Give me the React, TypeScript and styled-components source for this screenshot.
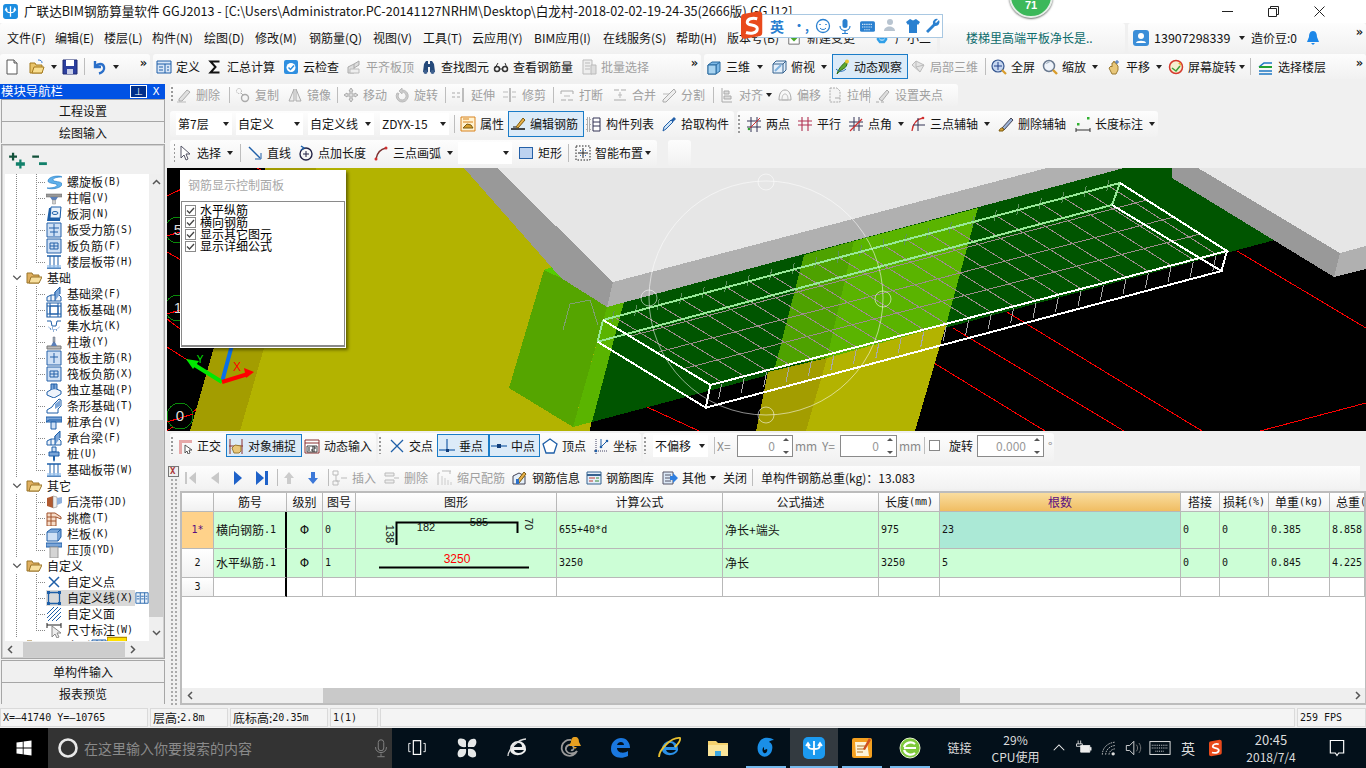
import React from 'react';
import styled, { createGlobalStyle } from 'styled-components';

const Global = createGlobalStyle`
  html, body { margin: 0; padding: 0; width: 1366px; height: 768px; overflow: hidden; background: #f0f0f0; }
  * { box-sizing: border-box; }
`;
const CJK = `"Noto Sans CJK SC", "Liberation Sans", sans-serif`;
const MONO = `"DejaVu Sans Mono", "Liberation Mono", monospace`;

/* ---------- icons ---------- */
const ICONS: Record<string, React.ReactNode> = {
  new: <><path d="M3 1h7l3 3v11H3z" fill="#fff" stroke="#555" /><path d="M10 1v3h3" fill="#ddd" stroke="#555" /></>,
  open: <><path d="M1 4h5l1 2h6v8H1z" fill="#e9c46a" stroke="#a57a1e" /><path d="M3 14l2-6h10l-2 6z" fill="#f8de90" stroke="#a57a1e" /><path d="M9 1c3 0 4 1 4 3" fill="none" stroke="#3a7bd0" /></>,
  save: <><path d="M1 1h14v14H1z" fill="#2c3f9e" stroke="#1c2870" /><path d="M4 1h8v6H4z" fill="#fff" /><path d="M5 10h6v5H5z" fill="#c9cfe8" /></>,
  undo: <path d="M4 2v6h6M4.500 7.500C7 4 12 4 13 8c.7 3-1.500 5.500-5 6.500" fill="none" stroke="#2a6fc9" strokeWidth="2.400" />,
  def: <><path d="M1 2h14v12H1z" fill="#d8e6f7" stroke="#1e5fa8" /><path d="M1 5h14M9 5v9M3 8h4M3 11h4M11 8h2M11 11h2" stroke="#1e5fa8" fill="none" /></>,
  sigma: <path d="M12.500 2.500H3.500l5 5.500-5 5.500h9" fill="none" stroke="#111" strokeWidth="2" />,
  cloud: <><rect x="1" y="1" width="14" height="14" rx="2" fill="#2f8fe0" /><circle cx="8" cy="8.500" r="4.500" fill="#fff" /><path d="M5.500 8.500l2 2 3.500-4" fill="none" stroke="#2f8fe0" strokeWidth="1.500" /></>,
  flat: <><path d="M2 14V8l6-3v9zM8 5l5-3v4l-5 3" fill="#ddd" stroke="#aaa" /><path d="M4 14h9v-4H4z" fill="#eee" stroke="#bbb" /></>,
  bino: <><path d="M2 13l1-8 2-3h2v11zM14 13l-1-8-2-3H9v11z" fill="#24497a" /><path d="M7 5h2v3H7z" fill="#24497a" /><circle cx="4.500" cy="13" r="2" fill="#40618f" /><circle cx="11.500" cy="13" r="2" fill="#40618f" /></>,
  look: <><circle cx="4" cy="10" r="2.500" fill="none" stroke="#333" strokeWidth="1.500" /><circle cx="12" cy="10" r="2.500" fill="none" stroke="#333" strokeWidth="1.500" /><path d="M6.500 10h3M2 9l3-5M14 9l-2-5" fill="none" stroke="#333" /></>,
  batch: <><path d="M2 1h9v14H2z" fill="#eee" stroke="#bbb" /><path d="M4 4h5M4 7h5M4 10h5M10 6h5v9h-5z" fill="#ddd" stroke="#bbb" /></>,
  cube: <><path d="M2 6l4-3h8v9l-4 3H2z" fill="#7db8e6" stroke="#2b6a9f" /><path d="M2 6h8v9M10 6l4-3" fill="none" stroke="#2b6a9f" /><path d="M2 6h8v9H2z" fill="#a8d3f0" stroke="#2b6a9f" /></>,
  top: <><path d="M2 5l3-3h10v9l-3 3H2z" fill="#e4effa" stroke="#35628f" /><path d="M2 5h10v9M12 5l3-3" fill="none" stroke="#35628f" /><path d="M4 12l6-6" stroke="#7fb2de" strokeWidth="2" /></>,
  orbit: <><path d="M3 15C5 8 9 6 12 2c2 2 1 6-3 8-2 1-4 3-6 5z" fill="#5fa82e" stroke="#2c6d14" /><circle cx="13" cy="2.500" r="2" fill="#e8c62e" /><path d="M2 10c3 3 7 3 10 0" fill="none" stroke="#2468b5" /></>,
  local: <><path d="M2 6l4-4 8 4-4 7z" fill="#e5e5e5" stroke="#bbb" /><path d="M6 2v6l8-2M6 8l4 5" fill="none" stroke="#bbb" /></>,
  full: <><circle cx="7" cy="7" r="6" fill="#c6d7f0" stroke="#34558f" strokeWidth="1.200" /><path d="M7 3v8M3 7h8" stroke="#23408a" /><path d="M11 11l4 4" stroke="#d99c2b" strokeWidth="2.200" /></>,
  zoom: <><circle cx="7" cy="7" r="5.500" fill="#eef3fa" stroke="#6a7a90" strokeWidth="1.500" /><path d="M4.500 5a3 3 0 0 1 3-2" fill="none" stroke="#9ab" /><path d="M11 11l4 4" stroke="#d99c2b" strokeWidth="2.400" /></>,
  pan: <><path d="M3 9l2-2 1 1V4l1 0 1-2 1 2h1l1 2 1 1v4l-2 4H6z" fill="#e8c77a" stroke="#9b7b33" /><path d="M11 1v4M9 3h4" stroke="#3a6bb5" /></>,
  screen: <><circle cx="8" cy="8" r="6.500" fill="#f5efd0" stroke="#d53a2e" strokeWidth="1.500" /><path d="M4 9l4 3 4-5" fill="none" stroke="#3aa03a" strokeWidth="1.500" /><path d="M10 4h3v3" fill="#e8b030" /></>,
  floors: <><path d="M1 8l5-4h8M1 12h13M1 15h13" fill="none" stroke="#1e78c4" strokeWidth="1.600" /><path d="M1 8h13" stroke="#20a030" strokeWidth="2" /></>,
  del: <><path d="M3 12l8-9 3 2-8 9H3z" fill="#e0e0e0" stroke="#aaa" /><path d="M1 15h9" stroke="#bbb" /></>,
  copy: <><circle cx="4" cy="4" r="2.500" fill="none" stroke="#aaa" strokeDasharray="1 1" /><circle cx="10" cy="11" r="3.500" fill="none" stroke="#aaa" strokeWidth="1.400" /><path d="M6 6l2 2" stroke="#aaa" /></>,
  mirror: <><path d="M7 2L2 14h5zM9 2l5 12H9z" fill="#eee" stroke="#aaa" /></>,
  move: <path d="M8 1l2 3H9v3h3V6l3 2-3 2V9H9v3h1l-2 3-2-3h1V9H4v1L1 8l3-2v1h3V4H6z" fill="#ddd" stroke="#aaa" />,
  rotate: <path d="M3 6a6 6 0 1 0 5-3V1L5 4l3 3V5a4 4 0 1 1-3 1.500z" fill="#ccc" stroke="#bbb" />,
  extend: <><path d="M12 1v14" stroke="#aaa" strokeWidth="1.500" /><path d="M1 6h3M6 6h3M1 10h3M6 10h3" stroke="#aaa" /></>,
  trim: <><path d="M8 1v14" stroke="#aaa" strokeWidth="1.500" /><path d="M1 5h5M1 10h5M10 5h4M10 10h4" stroke="#bbb" /></>,
  brk: <><path d="M2 4h12M2 13h5M9 13h5M2 4v3M14 4v3" stroke="#aaa" fill="none" /><path d="M5 9h6" stroke="#bbb" /></>,
  merge: <><path d="M2 3h5M9 3h5M2 13h12" stroke="#aaa" fill="none" /><path d="M6 8h4M8 5v6" stroke="#bbb" /></>,
  split: <><path d="M2 13L13 2 15 5 5 15H2z" fill="#eee" stroke="#aaa" /><path d="M2 7h6" stroke="#bbb" /></>,
  align: <><path d="M3 1v14h10" fill="none" stroke="#aaa" /><path d="M5 4h5v3H5zM5 9h7v3H5z" fill="#ddd" stroke="#aaa" /></>,
  offset: <><path d="M2 13c0-6 2-10 6-10s6 4 6 10z" fill="none" stroke="#aaa" /><path d="M5 13c0-4 1-6 3-6s3 2 3 6z" fill="none" stroke="#bbb" /></>,
  stretch: <><path d="M3 1h7l3 3v11H3z" fill="#f4f4f4" stroke="#aaa" strokeDasharray="2 1" /><path d="M8 11h5" stroke="#aaa" /></>,
  grip: <><path d="M4 12L12 3l2 2-7 9z" fill="#ddd" stroke="#aaa" /><path d="M1 15h3M6 15h3" stroke="#aaa" /></>,
  prop: <><path d="M1 1h14v14H1z" fill="#fff2d0" stroke="#d8821e" /><path d="M3 6h10M3 3h6" stroke="#d8821e" /><path d="M3 12l4-4 4 1 2 3z" fill="#d8a030" stroke="#7a5a10" /></>,
  edit: <><path d="M1 13h14" stroke="#111" strokeWidth="1.500" /><path d="M6 11l7-9 2 2-7 8z" fill="#e8b048" stroke="#7a5a10" /><path d="M3 11h3" stroke="#111" /></>,
  list: <><path d="M1 2h3v3H1zM1 7h3v3H1zM1 12h3v3H1z" fill="none" stroke="#666" strokeDasharray="1 1" /><path d="M7 2h7v13H7z" fill="#fff" stroke="#335" /><path d="M7 6h7M7 10h7" stroke="#335" /></>,
  pick: <><path d="M2 15l1-4 7-7 2 2-7 7z" fill="#cde3f6" stroke="#2460a8" /><path d="M10 4l3-3 2 2-3 3z" fill="#2460a8" /></>,
  two: <><path d="M5 1v15M11 1v15M1 5h14M1 11h14" stroke="#335" fill="none" /><path d="M2 14L14 2" stroke="#d03030" /><circle cx="3" cy="13" r="1.300" fill="#30a030" /></>,
  par: <path d="M5 1v14M11 1v14M1 5h14M1 9h14" stroke="#b03050" fill="none" strokeWidth="1.100" />,
  angle: <><path d="M6 1v14M11 1v14M1 6h14M1 10h14" stroke="#335" fill="none" /><path d="M2 15L14 3" stroke="#d03030" strokeWidth="1.300" /></>,
  arc3: <><path d="M2 15C3 7 7 3 13 2" fill="none" stroke="#d03030" strokeWidth="1.300" /><path d="M8 2v13M3 9h12" stroke="#335" /><circle cx="13" cy="2" r="1.300" fill="#d03030" /></>,
  brush: <><path d="M4 12L13 2l2 2-9 10z" fill="#9db3d6" stroke="#445" /><path d="M1 15c1-3 3-4 5-2l-1 2z" fill="#d8a030" stroke="#7a5a10" /></>,
  dim: <><path d="M1 12v4M15 12v4M1 14h14" stroke="#333" fill="none" /><rect x="2" y="7" width="2.500" height="2.500" fill="#30b030" /><rect x="12" y="1" width="2.500" height="2.500" fill="#30b030" /></>,
  cursor: <path d="M4 1v12l3-3 2 5 2-1-2-5h4z" fill="#fff" stroke="#556" />,
  line: <><path d="M2 2l11 11" stroke="#1e5fa8" strokeWidth="1.500" /><path d="M8 14l6 0 0-6" fill="none" stroke="#1e5fa8" /></>,
  ptplus: <><circle cx="8" cy="9" r="6" fill="none" stroke="#224" strokeWidth="1.400" /><path d="M8 6v6M5 9h6" stroke="#224" /><path d="M3 1l3 2-3 2" fill="none" stroke="#1e5fa8" strokeWidth="1.500" /></>,
  arc: <><path d="M3 14C4 8 8 4 13 3" fill="none" stroke="#7a3030" strokeWidth="1.500" /><circle cx="3" cy="14" r="1.500" fill="#d03030" /><circle cx="13" cy="3" r="1.500" fill="#d03030" /></>,
  rect: <rect x="1.500" y="2.500" width="13" height="11" fill="#bcd2f0" stroke="#2460a8" />,
  smart: <><path d="M1 1h14v14H1z" fill="none" stroke="#222" strokeDasharray="1.500 1.500" /><path d="M8 3v10M3 8h10" stroke="#222" /><path d="M5 5h1v1H5zM10 5h1v1h-1zM5 10h1v1H5zM10 10h1v1h-1z" fill="#2a6fc9" /></>,
  ortho: <><path d="M2 2h13v3H5v11H2z" fill="#e6a8a8" /><path d="M8 7v8l2-2 1 3 2-1-1-3h3z" fill="#fff" stroke="#555" /></>,
  snap: <><path d="M2 1v15M14 1v15M1 8h14" stroke="#8a3030" fill="none" /><path d="M4 10l3-3 6 1v5l-2 2H6z" fill="#e8c77a" stroke="#9b7b33" /></>,
  dyn: <><path d="M1 2h14v13H1z" fill="#fff" stroke="#8a3030" /><path d="M1 5h14" stroke="#8a3030" /><path d="M3 8h10v6H3z" fill="none" stroke="#444" /><path d="M5 9v4M8 9h3v2H8v2h3" fill="none" stroke="#222" /></>,
  cross: <path d="M2 2l12 12M14 2L2 14" stroke="#1e5fa8" strokeWidth="1.300" />,
  perp: <><path d="M0 12h16" stroke="#1e5fa8" strokeWidth="1.200" /><path d="M8 1v11" stroke="#1e5fa8" strokeWidth="1.200" /><rect x="7" y="11" width="3" height="3" fill="#123e7a" /></>,
  mid: <><path d="M0 8h16" stroke="#1e5fa8" strokeWidth="1.200" /><rect x="6" y="6" width="4" height="4" fill="#123e7a" /></>,
  vertex: <path d="M8 1l7 5-3 9H4L1 6z" fill="#fff" stroke="#1e5fa8" strokeWidth="1.300" />,
  coord: <><path d="M3 1v15M1 13h14" stroke="#446" strokeDasharray="1 1" fill="none" /><path d="M8 1v8l6-6" stroke="#1e5fa8" fill="none" /><circle cx="8" cy="9" r="1.300" fill="#1e5fa8" /><circle cx="14" cy="3" r="1.300" fill="#1e5fa8" /><circle cx="3" cy="13" r="1.300" fill="#1e5fa8" /></>,
  first: <path d="M3 2h2v12H3zM14 2v12L7 8z" fill="#c8c8c8" />,
  prev: <path d="M12 2v12L4 8z" fill="#c8c8c8" />,
  next: <path d="M4 1v14l8-7z" fill="#1f62c9" />,
  last: <path d="M2 1v14l8-7zM11 1h3v14h-3z" fill="#1f62c9" />,
  up: <path d="M8 2l5 6h-3v6H6V8H3z" fill="#ccc" />,
  down: <path d="M6 2h4v6h3l-5 6-5-6h3z" fill="#3c78d8" />,
  ins: <><path d="M1 1h5v4H1zM1 11h5v4H1z" fill="none" stroke="#bbb" /><path d="M4 5v6h4M9 8h6" stroke="#bbb" fill="none" /></>,
  rm: <><path d="M1 3h9v3H1zM1 10h9v3H1z" fill="#eee" stroke="#bbb" /><path d="M10 8h5" stroke="#bbb" /></>,
  scale: <><path d="M1 15V3M1 3h2M5 1h9M13 1v3" stroke="#bbb" fill="none" /><path d="M5 15V6M8 15V8M11 15v-5M14 15v-3" stroke="#ccc" /></>,
  info: <><path d="M1 6l6-3 6 3v8H1z" fill="#e4effa" stroke="#445" /><path d="M5 11l7-9 2 2-7 9z" fill="#e8b048" stroke="#7a5a10" /><path d="M4 9h3v5H4z" fill="#2a6fc9" /></>,
  lib: <><path d="M1 2h14v12H1z" fill="#e4effa" stroke="#35628f" /><path d="M1 5h14" stroke="#35628f" strokeWidth="2" /><path d="M3 8h6M3 11h4" stroke="#c03a2e" /><path d="M10 8h3M9 11h4" stroke="#3a8a2e" /></>,
  other: <><path d="M1 2h10v12H1z" fill="#dce9f7" stroke="#556" /><path d="M3 5h6M3 8h6M3 11h6" stroke="#556" /><path d="M8 6h3V3l5 5-5 5v-3H8z" fill="#2f7fe0" /></>,
  spiral: <><path d="M2 7c0-5 12-6 14-4-5 0-9 1-9 3 0 2 9 1 9 4 0 4-10 6-15 4 6 0 10-1 10-3 0-2-9-1-9-4z" fill="#5fb0ea" stroke="#1e78c4" strokeWidth=".6" /></>,
  capital: <><path d="M0 4h16v3H0z" fill="#999" stroke="#666" strokeWidth=".5" /><path d="M4 7h8l-2 3H6z" fill="#5a7fb8" /><path d="M6.500 10h3v4h-3z" fill="#d0d0d0" stroke="#888" strokeWidth=".5" /></>,
  hole: <><path d="M1 15l2-13h12l-1 13z" fill="#1e5fa8" /><path d="M5 1h10l-1 11H4z" fill="#eaf2fb" stroke="#1e5fa8" /><ellipse cx="9" cy="7" rx="3" ry="1.500" fill="none" stroke="#1e5fa8" /></>,
  sbar: <><path d="M1 1h14v14H1z" fill="#cfe0f5" stroke="#2460a8" /><path d="M8 2v12M3 6h10M4 10h8" stroke="#2460a8" /></>,
  nbar: <><path d="M1 1h14v14H1z" fill="#cfe0f5" stroke="#2460a8" /><path d="M4 5h8v6H4zM8 5v6M4 8h8" fill="none" stroke="#2460a8" /></>,
  band: <><path d="M1 2h14M1 14h14" stroke="#1e5fa8" strokeWidth="1.400" /><path d="M4 2v12M8 2v12M12 2v12" stroke="#1e5fa8" /><path d="M1 11h14v3H1z" fill="#9cc4ee" opacity=".7" /></>,
  beam: <><path d="M1 15h14v-4l-3-3V3L9 6v3L5 9 1 11z" fill="#eef3fa" stroke="#1e5fa8" /><path d="M9 15V6l5-5v7" fill="#7aa5d8" stroke="#1e5fa8" /><path d="M5 15V9" stroke="#1e5fa8" /></>,
  raft: <><path d="M1 1h14v14H1z" fill="#fff" stroke="#1e5fa8" strokeWidth="1.200" /><path d="M4 4h8v8H4zM1 4h14M1 12h14M4 1v14M12 1v14" fill="none" stroke="#1e5fa8" /></>,
  pit: <><path d="M1 3h4l1 5h4l1-5h4" fill="none" stroke="#1e5fa8" /><path d="M2 8c1 5 11 5 12 0l-3 3H5z" fill="#7aa5d8" /><path d="M4 11h1M7 13h1M10 12h1M6 10h1" stroke="#1e5fa8" /></>,
  pier: <><path d="M1 12h14v3H1z" fill="#bbb" stroke="#777" /><path d="M5 12l2-4h2l2 4z" fill="#5a7fb8" /><path d="M7 3h2v5H7z" fill="#9ab" stroke="#667" strokeWidth=".5" /></>,
  rmain: <><path d="M1 1h14v14H1z" fill="#cfe0f5" stroke="#2460a8" /><path d="M8 3v10M4 7h8" stroke="#2460a8" /></>,
  iso: <><path d="M1 10l7-4 7 3v3l-7 4-7-3z" fill="#eef3fa" stroke="#1e5fa8" /><path d="M5 8V2h6v5" fill="#7aa5d8" stroke="#1e5fa8" /><path d="M8 2v5" stroke="#1e5fa8" /></>,
  strip: <><path d="M1 15v-3l5-3 2-3 5-5 2 1v6l-3 3v4z" fill="#fff" stroke="#1e5fa8" /><path d="M9 6l5-4v6l-5 3z" fill="#7aa5d8" /></>,
  pcap: <><path d="M0 3h16v5H0z" fill="#7aa5d8" stroke="#1e5fa8" /><path d="M0 8l3-2h13" fill="none" stroke="#1e5fa8" /><path d="M5 8h5v7H5z" fill="#cfe0f5" stroke="#1e5fa8" /></>,
  pile: <><path d="M6 1h4v5H6z" fill="#cfe0f5" stroke="#1e5fa8" /><path d="M3 6h10v4H3z" fill="#7aa5d8" stroke="#1e5fa8" /><path d="M7 10h2v4l-1 2-1-2z" fill="#1e5fa8" /></>,
  post: <><path d="M1 4l6-2v12l-6-2z" fill="#b05a30" /><path d="M7 2l4 1v10l-4 1z" fill="#eee" stroke="#777" strokeWidth=".5" /><path d="M11 4l5-1v6l-5 2z" fill="#8fb0dc" /></>,
  eave: <><path d="M1 3h8l6 4v2l-5-2v9H1z" fill="#f6dcc8" stroke="#a0522d" /><path d="M1 7h9M1 11h9M5 3v13" stroke="#a0522d" /></>,
  rail: <><path d="M1 6h11v9H1z" fill="#cfe0f5" stroke="#1e5fa8" /><path d="M1 6l4-3h10l-3 3M12 6l3-3v8l-3 4" fill="#7aa5d8" stroke="#1e5fa8" /></>,
  coping: <><path d="M0 1h16v4H0z" fill="#7aa5d8" stroke="#1e5fa8" /><path d="M4 5h8v11H4z" fill="#d4d4d4" stroke="#999" /></>,
  point: <path d="M3 3l10 10M13 3L3 13" stroke="#1e5fa8" strokeWidth="1.500" />,
  cline: <><path d="M2.500 2.500h11v11h-11z" fill="none" stroke="#1e5fa8" strokeWidth="1.300" /><path d="M1 1h3v3H1zM12 1h3v3h-3zM1 12h3v3H1zM12 12h3v3h-3z" fill="#1e5fa8" /></>,
  face: <path d="M1 8l7-7M1 12L12 1M2 15L15 2M6 15l9-9M10 15l5-5" stroke="#1e5fa8" />,
  mark: <><path d="M1 1v5M15 1v5M1 3h14" stroke="#222" /><path d="M6 4v11l3-3 2 4 2-1-2-4h4z" fill="#eee" stroke="#888" /></>,
  cols: <><path d="M1 2h14v12H1z" fill="#eaf2fb" stroke="#1e5fa8" /><path d="M6 2v12M11 2v12M2 6h3M2 9h3M7 6h3M7 9h3M12 6h2M12 9h2" stroke="#1e5fa8" /></>,
  yel: <path d="M0 1h16v14H0z" fill="#ffe000" stroke="#b89000" />,
  folder: <><path d="M1 3h5l1 2h6v8H1z" fill="#e0b060" stroke="#9a7428" /><path d="M3 13l2-6h11l-3 6z" fill="#f7df9e" stroke="#9a7428" /></>,
  chev: <path d="M3 5l5 5 5-5" fill="none" stroke="#555" strokeWidth="1.600" />,
  plus: <><path d="M1 4h7v2H1zM3.500 1.500h2v7h-2z" fill="#12513a" /><path d="M7 10h8v3H7zM10 7.500h2v8h-2z" fill="#12806a" /></>,
  minus: <><path d="M2 4h6v2H2z" fill="#12513a" /><path d="M8 10h7v2.500H8z" fill="#12806a" /></>,
  logo: <><rect x="1" y="1" width="14" height="14" rx="2.500" fill="#1c8de0" /><path d="M8 3v10M4 6c0 3 2 3 4 3s4 0 4-3M3 7l1-2 1 2M11 7l1-2 1 2" fill="none" stroke="#fff" strokeWidth="1.200" /></>,
  change: <><path d="M2 1h12v14H2z" fill="#fff" stroke="#666" /><path d="M8 4l4 4-4 4-4-4z" fill="#4aa82a" /></>,
  cs: <><path d="M8 1a6 6 0 0 1 6 6v3l-3 4H5l-3-4V7a6 6 0 0 1 6-6z" fill="#2f9fe8" /><path d="M5 9c1 2 5 2 6 0" stroke="#fff" fill="none" /></>,
  user: <><rect width="16" height="16" rx="3" fill="#3b8ed8" /><circle cx="8" cy="6" r="3" fill="#fff" /><path d="M3 13c0-3 10-3 10 0z" fill="#fff" /></>,
  bell: <path d="M8 1c3 0 4 3 4 6l2 5H2l2-5c0-3 1-6 4-6zM6 13h4l-2 2z" fill="#1d87e8" />,
  smile: <><circle cx="8" cy="8" r="6.500" fill="none" stroke="#2a80d0" strokeWidth="1.300" /><path d="M5 6v1M11 6v1" stroke="#2a80d0" strokeWidth="1.500" /><path d="M5 10c1 2 5 2 6 0" fill="none" stroke="#2a80d0" /></>,
  mic: <><rect x="5.500" y="1" width="5" height="9" rx="2.500" fill="#2a80d0" /><path d="M3 8c0 6 10 6 10 0M8 13v3M5 15.500h6" fill="none" stroke="#2a80d0" strokeWidth="1.200" /></>,
  kb: <><rect x="1" y="3" width="14" height="10" rx="1.500" fill="#2a80d0" /><path d="M3 6h10M3 8.500h10M5 11h6" stroke="#fff" strokeDasharray="1 1" /></>,
  pers: <><circle cx="7" cy="4" r="3" fill="#b8c4d0" /><path d="M1 13c0-6 11-6 11 0z" fill="#b8c4d0" /></>,
  shirt: <path d="M5 1l3 1.500L11 1l4 3-2 3-1-1v9H4V6L3 7 1 4z" fill="#2a80d0" />,
  wrench: <path d="M14 2l-3 3-1-1 3-3a4 4 0 0 0-5 5L1 13l2 2 7-7a4 4 0 0 0 4-6z" fill="#2a80d0" />,
};

const TB: Record<string, React.ReactNode> = {
  win: <path d="M3 5.500l7.500-1v7H3zM11.500 4.300L21 3v8.500h-9.500zM3 12.500h7.500v7l-7.500-1zM11.500 12.500H21V21l-9.500-1.300z" fill="#fff" />,
  ring: <circle cx="12" cy="12" r="8.500" fill="none" stroke="#e8e8e8" strokeWidth="2.600" />,
  mic: <><rect x="9" y="3" width="6" height="12" rx="3" fill="none" stroke="#888" /><path d="M6 11c0 8 12 8 12 0M12 18v3M8 21.500h8" fill="none" stroke="#888" /></>,
  view: <><rect x="8" y="4" width="8" height="15" fill="none" stroke="#fff" strokeWidth="1.300" /><path d="M5 7H3v9h2M19 7h2v9h-2" fill="none" stroke="#fff" /></>,
  fan: <><path d="M11 11C5 12 2 8 3 4c1-2 6-2 8 1zM13 11c-1-6 3-9 7-8 2 1 2 6-1 8zM13 13c6-1 9 3 8 7-1 2-6 2-8-1zM11 13c1 6-3 9-7 8-2-1-2-6 1-8z" fill="#e6e8e8" /></>,
  ieb: <><path d="M4 13a8 8 0 0 1 16 0v1H8c1 4 8 4 10 0h2c-2 7-16 7-16-1zM8 11h8a4 4 0 0 0-8 0z" fill="#eee" /><path d="M2 20C2 14 12 3 20 3" fill="none" stroke="#ddd" strokeWidth="1.300" /></>,
  swirl: <><path d="M13 4a8 8 0 1 0 6 11c-2 3-9 4-11-1-1-4 4-7 7-4 2 2 0 5-2 4" fill="none" stroke="#999" strokeWidth="1.800" /><path d="M17 1c3 0 4 2 4 5l2 4H11l2-4c0-3 1-5 4-5zM15 11h4l-2 2z" fill="#e8a020" /></>,
  edge: <path d="M3 13C3 6 8 2 13 2c6 0 9 5 9 10H9c0 5 7 6 11 3v5c-8 4-17 1-17-7zM9 9h7c0-4-6-4-7 0z" fill="#1a78e0" />,
  ie: <><path d="M4 13a8 8 0 0 1 16 0v1H8c1 4 8 4 10 0h2c-2 7-16 7-16-1zM8 11h8a4 4 0 0 0-8 0z" fill="#2a90e8" /><path d="M1 21C1 14 13 1 22 2c1 3-3 7-5 9" fill="none" stroke="#e8c030" strokeWidth="1.800" /></>,
  folder: <><path d="M2 5h8l2 2h10v13H2z" fill="#f5d26e" /><path d="M2 9h20v11H2z" fill="#fbe59a" /><path d="M9 15h6v5H9z" fill="#3fa7e0" /></>,
  g: <path d="M6 5c3-4 10-4 14-1-3 0-4 1-5 2 3 1 4 4 3 8-1 5-6 8-10 6C3 18 2 10 6 5zm4 6c-2 1-2 5 0 6s4-2 3-4l-3 1z" fill="#1a8fe8" fillRule="evenodd" />,
  gld: <><rect x="1" y="1" width="22" height="22" rx="5" fill="#1c9af0" /><path d="M12 5v14M6 9c0 4 3 4 6 4s6 0 6-4M4 10l2-3 2 3M16 10l2-3 2 3" fill="none" stroke="#fff" strokeWidth="1.800" /></>,
  note: <><rect x="2" y="2" width="20" height="20" rx="2" fill="#f4a020" /><path d="M5 6h12l2 14H6z" fill="#fdf3d8" /><path d="M7 10h8M7 13h8M7 16h6" stroke="#b07020" /><path d="M19 2l-6 11 2 1 6-10z" fill="#d05020" /></>,
  egreen: <><circle cx="12" cy="12" r="10" fill="#7ec93c" stroke="#e8f4d0" /><path d="M6 12h12M17 8a7 7 0 0 0-11 3M6 14a7 7 0 0 0 11 3" fill="none" stroke="#fff" strokeWidth="2.200" /></>,
  caret: <path d="M5 15l7-7 7 7" fill="none" stroke="#eee" strokeWidth="1.400" />,
  batt: <><path d="M8 9h11v8H8z" fill="#eee" stroke="#eee" /><path d="M19 11h2v4h-2z" fill="#eee" /><path d="M5 3v4M8 3v4M3 7h7v3H3z" stroke="#eee" fill="none" /></>,
  wifi: <><path d="M4 20c0-8 6-14 15-15M8 20c0-5 4-10 11-11M12 20c0-3 2-6 7-7" fill="none" stroke="#ccc" strokeDasharray="2 1" /><circle cx="17" cy="19" r="2" fill="#ddd" /></>,
  spk: <><path d="M4 9h4l5-5v16l-5-5H4z" fill="none" stroke="#eee" /><path d="M16 8c2 2 2 6 0 8M19 6c3 3 3 9 0 12" fill="none" stroke="#888" /></>,
  kbd: <><rect x="1" y="5" width="22" height="14" fill="none" stroke="#eee" /><path d="M3 9h18M3 12h18M7 15.500h10" stroke="#eee" strokeDasharray="1 1" /></>,
  s: <><path d="M4 6c0-2 1-3 3-3l11-2c2 0 3 1 3 3v14c0 2-1 3-3 3L7 23c-2 0-3-1-3-3z" fill="#e94a1c" /><path d="M17 7c-4-1-8 0-8 3s8 1 8 5-6 4-9 3" fill="none" stroke="#fff" strokeWidth="2.400" /></>,
  notif: <path d="M4 3h16v15h-6l-2 3-2-3H4z" fill="none" stroke="#fff" strokeWidth="1.400" />,
};

const IconSvg = styled.svg`display: block; flex: none;`;
const Ic = ({ n, s = 16 }: { n: string; s?: number }) => (
  <IconSvg viewBox="0 0 16 16" width={s} height={s}>{ICONS[n]}</IconSvg>
);
const Tb = ({ n, s = 24 }: { n: string; s?: number }) => (
  <IconSvg viewBox="0 0 24 24" width={s} height={s}>{TB[n]}</IconSvg>
);

/* ---------- frame ---------- */
const Page = styled.div`
  width: 1366px; height: 768px; overflow: hidden; position: relative;
  display: flex; flex-direction: column;
  background: #f0f0f0; color: #141414;
  font: 12px/1 ${CJK};
`;
const TitleBar = styled.div`height: 23px; background: #fff; display: flex; align-items: center; padding-left: 2px; flex: none;`;
const TitleText = styled.div`margin-left: 5px; white-space: nowrap; font-size: 12.600px; width: 1180px;`;
const WinBtn = styled.div`width: 46px; height: 23px; display: flex; align-items: center; justify-content: center;`;

const MenuRow = styled.div`height: 30px; display: flex; flex: none; margin-bottom: 1px; gap: 3px;`;
const Chunk = styled.div<{ $w?: number; $h?: number; $pad?: number }>`
  ${p => (p.$w ? `width:${p.$w}px;` : 'flex:1;')}
  ${p => (p.$h ? `height:${p.$h}px;` : 'height:100%;')}
  padding-left: ${p => p.$pad ?? 0}px;
  flex-shrink: 0;
  display: flex; align-items: center;
  background: linear-gradient(#fdfdfd, #f1f1f1);
  border-radius: 3px;
  white-space: nowrap;
`;
const SnapChunk = styled(Chunk)`padding-top: 1px; padding-bottom: 5px;`;
const MenuItem = styled.div<{ $x: number }>`width: ${p => p.$x}px; flex: none; display: flex; align-items: center; gap: 6px;`;
const Ask = styled.div`color: #0b6b6b; font-size: 12px; margin-left: 26px;`;
const Phone = styled.span`font-size: 12.500px; margin-left: 5px;`;

const ToolRow = styled.div<{ $top?: number; $h: number; $left?: number }>`
  height: ${p => p.$h}px; margin-top: ${p => p.$top ?? 0}px; flex: none;
  padding-left: ${p => p.$left ?? 0}px;
  display: flex; gap: 3px;
`;
const Main = styled.div`height: 624px; margin-top: 5px; display: flex; flex: none;`;

/* toolbar parts */
const ToolBox = styled.div<{ $w: number; $off?: boolean; $on?: boolean; $white?: boolean }>`
  width: ${p => p.$w}px; flex: none; height: 100%;
  display: flex; align-items: center; white-space: nowrap;
  color: ${p => (p.$off ? '#a0a0a0' : '#141414')};
  ${p => p.$on ? 'background:#dcebf8; outline:1.500px solid #1a7cc8; outline-offset:-1.500px;' : ''}
`;
const Slot = styled.div`width: 20px; flex: none; display: flex; justify-content: center; align-items: center;`;
const Label = styled.span`margin-left: 2px;`;
const RotLabel = styled(Label)`margin-left: 9px;`;
const CloseLabel = styled.span`margin-left: 3px; width: 29px; flex: none;`;
const Caret = styled.i<{ $m?: number }>`
  display: block; flex: none; margin-left: ${p => p.$m ?? 6}px;
  width: 0; height: 0; border: 3px solid transparent; border-top: 4px solid #222; border-bottom: 0;
`;
const Sep = styled.div<{ $w?: number; $ml?: number }>`
  width: ${p => p.$w ?? 4}px; margin-left: ${p => p.$ml ?? 0}px; flex: none; display: flex; justify-content: flex-start; align-items: center; height: 100%;
  &::before { content: ''; width: 1px; height: 70%; background: #bdbdbd; }
`;
const Gap = styled.div<{ $w: number }>`width: ${p => p.$w}px; flex: none;`;
const Grip = styled.div<{ $w?: number }>`
  width: ${p => p.$w ?? 4}px; flex: none; height: 70%;
  background: repeating-linear-gradient(to bottom, #9a9a9a 0 2px, transparent 2px 4px) 1px 0 / 2px 100% no-repeat;
`;
const More = styled.div`margin-left: auto; margin-right: 3px; font-size: 12px; font-family: ${MONO}; font-weight: 700; align-self: flex-start; margin-top: 3px;`;
const ComboBox = styled.div<{ $w: number; $ml?: number }>`
  width: ${p => p.$w}px; margin-left: ${p => p.$ml ?? 0}px; height: 22px; flex: none;
  background: #fff; display: flex; align-items: center; justify-content: space-between;
  padding: 0 3px 0 2px; white-space: nowrap;
`;

type T = { i?: string; t?: string; w: number; c?: boolean; cm?: number; off?: boolean; on?: boolean };
const Tools = ({ items }: { items: T[] }) => (
  <>
    {items.map((d, k) => (
      <ToolBox key={k} $w={d.w} $off={d.off} $on={d.on}>
        <Slot>{d.i && <Ic n={d.i} />}</Slot>
        {d.t && <Label>{d.t}</Label>}
        {d.c && <Caret $m={d.cm} />}
      </ToolBox>
    ))}
  </>
);

/* left navigation */
const Nav = styled.div`width: 167px; flex: none; display: flex; flex-direction: column; padding-left: 1px;`;
const NavHead = styled.div`
  height: 15px; background: #0152e4; color: #fff; display: flex; align-items: center;
  font-size: 12.400px; white-space: nowrap; margin-left: -1px; width: 165px; padding-left: 1px; flex: none;
`;
const Pin = styled.div`margin-left: auto; width: 17px; height: 13px; border: 1px solid #fff; background: #00308c; display: flex; justify-content: center; align-items: center; font-size: 9px;`;
const Close = styled.div`width: 18px; text-align: center; font-family: ${MONO}; font-size: 11px;`;
const NavBtn = styled.div`
  height: 22px; flex: none; width: 164px; display: flex; align-items: center; justify-content: center;
  background: #f0f0f0; border: 1px solid #a6a6a6; border-bottom-width: 0;
`;
const TreeFrame = styled.div`
  height: 515px; flex: none; width: 164px; margin-top: 1px; margin-bottom: 1px;
  border: 1px solid #a6a6a6; outline: 1px solid #d0d0d0; outline-offset: -2px;
  display: flex; flex-direction: column; background: #f0f0f0;
`;
const TreeTools = styled.div`height: 29px; display: flex; align-items: center; gap: 4px; padding-left: 6px; flex: none;`;
const TreeBody = styled.div`height: 467px; display: flex; flex: none;`;
const TreeList = styled.div`width: 144px; background: #fff; overflow: hidden; flex: none; margin-left: 3px;`;
const TreeRow = styled.div`
  height: 16px; display: flex; align-items: center; white-space: nowrap;
  background: repeating-linear-gradient(to bottom, #888 0 1px, transparent 1px 2px) 11px 0 / 1px 100% no-repeat;
`;
const Elbow = styled.div<{ $last?: boolean }>`
  width: 10px; height: 16px; margin-left: 31px; flex: none; position: relative;
  background:
    repeating-linear-gradient(to bottom, #888 0 1px, transparent 1px 2px) 0 0 / 1px ${p => (p.$last ? '8px' : '100%')} no-repeat,
    repeating-linear-gradient(to right, #888 0 1px, transparent 1px 2px) 0 8px / 100% 1px no-repeat;
`;
const GroupHead = styled.div`
  display: flex; align-items: center; height: 16px; background: #fff; padding-left: 6px; width: 38px; gap: 3px; flex: none;
`;
const Key = styled.span`font: 10px/1 ${MONO};`;
const TreeText = styled.span<{ $sel?: boolean }>`
  height: 16px; display: flex; align-items: center; padding-left: 5px; flex: 1;
  ${p => p.$sel ? 'background:#d9d9d9;' : ''}
`;
const GroupText = styled(TreeText)<{ $in?: number }>`padding-left: ${p => p.$in ?? 4}px; flex: none;`;
const TreeIconCell = styled.div<{ $sel?: boolean }>`
  ${p => p.$sel ? 'background:#d9d9d9;' : ''}
  height: 16px; display: flex; align-items: center; flex: none;
`;
const VScroll = styled.div`width: 15px; flex: none; background: #efefef; display: flex; flex-direction: column; align-items: center;`;
const VThumb = styled.div`margin-top: 230px; height: 197px; width: 15px; background: #cdcdcd; flex: none;`;
const Arrow = styled.div<{ $h?: number; $end?: boolean }>`
  height: ${p => p.$h ?? 16}px; width: 15px; display: flex; align-items: center; justify-content: center; flex: none;
  ${p => (p.$end ? 'margin-top:auto;' : '')}
`;
const HEnd = styled(Arrow)`margin-top: 0; margin-left: auto;`;
const HScrollBar = styled.div`height: 17px; display: flex; background: #efefef; flex: none; align-items: center;`;
const HThumbLeft = styled.div`height: 15px; width: 102px; background: #cdcdcd; margin-left: 6px;`;

/* right side */
const Work = styled.div`width: 1199px; flex: none; display: flex; flex-direction: column;`;
const Canvas = styled.div`height: 263px; margin-top: 2px; flex: none; position: relative; overflow: hidden; background: #000;`;
const CanvasArt = styled.svg`display: block;`;
const Floating = styled.div`
  position: absolute; left: 13px; top: 2px; width: 166px; height: 178px; background: #fff;
  box-shadow: 2px 2px 3px rgba(0,0,0,.45); padding: 2px 1px 1px 1px; display: flex; flex-direction: column;
`;
const FloatTitle = styled.div`height: 29px; color: #a8a8a8; padding: 7px 0 0 7px; font-size: 12px; flex: none;`;
const FloatBody = styled.div`flex: 1; border: 1px solid #8a8a8a; border-right-color: #888; border-bottom: 2px solid #8a8a8a; padding-top: 2px; margin-left: 0;`;
const CheckRow = styled.div`height: 12px; display: flex; align-items: center; padding-left: 3px; gap: 4px; color: #000; white-space: nowrap;`;
const Check = styled.span`
  width: 11px; height: 11px; border: 1px solid #8a8a8a; background: #fff; flex: none; display: flex; align-items: center; justify-content: center;
`;
const TinyCheck = styled.svg`display: block;`;

const SnapRow = styled.div`height: 29px; margin-top: 2px; display: flex; gap: 2px; flex: none; padding-left: 3px;`;
const Spin = styled.div<{ $w: number; $ml?: number }>`
  width: ${p => p.$w}px; height: 22px; flex: none; border: 1px solid #8a8a8a; background: #fff; margin-left: ${p => p.$ml ?? 0}px;
  color: #999; font-size: 12px; display: flex; align-items: center; justify-content: flex-end; padding-right: 17px; position: relative;
`;
const SpinArrows = styled.div`
  position: absolute; right: 2px; top: 2px; bottom: 2px; width: 9px; display: flex; flex-direction: column; justify-content: space-between; align-items: center;
  &::before { content: ''; border: 3px solid transparent; border-bottom: 3px solid #555; border-top: 0; }
  &::after { content: ''; border: 3px solid transparent; border-top: 3px solid #555; border-bottom: 0; }
`;
const Muted = styled.span<{ $w?: number; $ml?: number }>`
  color: #888; flex: none; margin-left: ${p => p.$ml ?? 0}px; ${p => p.$w ? `width:${p.$w}px;` : ''}
`;
const BoxCheck = styled.span`width: 11px; height: 11px; border: 1px solid #888; background: #fff; flex: none; margin-left: 4px;`;

const Dock = styled.div`height: 240px; margin-top: 3px; display: flex; flex: none;`;
const Strip = styled.div`
  width: 13px; flex: none; padding-top: 1px; display: flex; flex-direction: column; align-items: center;
`;
const StripX = styled.div`width: 11px; height: 11px; border: 1px solid #777; background: #eee; position: relative; flex: none;
  &::before { content: 'X'; position: absolute; left: 1px; top: -1px; font: 700 9px/11px ${MONO}; color: #a33; }
`;
const StripDots = styled.div`
  width: 8px; flex: 1; margin-top: 1px;
  background: radial-gradient(#aaa 1px, transparent 1.300px) 0 0 / 4px 4px;
`;
const DockMain = styled.div`flex: 1; display: flex; flex-direction: column; min-width: 0;`;
const EditBar = styled.div`
  height: 23px; margin-top: 1px; flex: none; display: flex; align-items: center; white-space: nowrap;
  width: 1180px; background: linear-gradient(#fdfdfd, #f2f2f2);
`;
const GridFrame = styled.div`
  flex: 1; margin-top: 2px; width: 1186px; border: 2px solid #bcbcbc; border-bottom-width: 2px; border-right-width: 1px;
  background: #fff; display: flex; flex-direction: column; min-height: 0;
`;
const Grid = styled.div`
  display: grid;
  grid-template-columns: 32px 73px 36px 33px 201px 166px 156px 61px 241px 39px 49px 61px 35px;
  grid-template-rows: 19px 37px 29px 19px;
  flex: none; width: 100%; overflow: hidden;
`;
const Cell = styled.div<{ $bg?: string; $c?: string; $center?: boolean }>`
  min-width: 0; overflow: hidden; white-space: nowrap; position: relative;
  border-right: 1px solid #b8b8b8; border-bottom: 1px solid #b8b8b8;
  display: flex; align-items: center; padding-left: ${p => (p.$center ? 0 : 2)}px;
  ${p => (p.$center ? 'justify-content:center;' : '')}
  background: ${p => p.$bg ?? '#fff'}; color: ${p => p.$c ?? '#141414'};
`;
const Head = styled(Cell)<{ $hot?: boolean; $clip?: boolean }>`
  background: ${p => (p.$hot ? 'linear-gradient(#f9dd9f,#f0bd62)' : 'linear-gradient(#fff,#f1f1f1)')};
  color: ${p => (p.$hot ? '#5a0f80' : '#141414')};
  justify-content: ${p => (p.$clip ? 'flex-start' : 'center')}; padding-left: ${p => (p.$clip ? 6 : 0)}px;
`;
const Rail = styled(Cell)`border-right: 2px solid #000;`;
const Mono = styled.span`font: 10px/1 ${MONO};`;
const Sym = styled.span`font: 12px/1 "DejaVu Sans", sans-serif;`;
const ShapeArt = styled.svg`display: block; position: absolute; left: 0; top: 0;`;
const GridSpace = styled.div`flex: 1;`;
const HBar = styled.div`height: 15px; flex: none; display: flex; background: #efefef; align-items: center;`;
const HThumb = styled.div`width: 637px; height: 15px; background: #c9c9c9; margin-left: 126px; flex: none;`;

const Status = styled.div`height: 20px; flex: none; display: flex; gap: 2px; white-space: nowrap;`;
const StatusCell = styled.div<{ $w?: number }>`
  ${p => (p.$w ? `width:${p.$w}px;` : 'flex:1;')} flex-shrink: 0;
  height: 19px; background: #f4f4f4; border: 1px solid #dadada; display: flex; align-items: center; padding-left: 2px; font-size: 12px;
`;

const TaskBar = styled.div`height: 40px; flex: none; background: #03101a; display: flex; color: #ddd;`;
const Start = styled.div`width: 48px; flex: none; background: #000; display: flex; align-items: center; justify-content: center;`;
const Search = styled.div`width: 344px; flex: none; background: #333; display: flex; align-items: center; padding-left: 8px; color: #8a8a8a; font-size: 14px;`;
const SearchTx = styled.span`margin-left: 4px; width: 296px;`;
const App_ = styled.div<{ $w: number; $active?: boolean; $run?: boolean }>`
  width: ${p => p.$w}px; flex: none; display: flex; align-items: center; justify-content: center; position: relative;
  background: ${p => (p.$active ? '#333a40' : 'transparent')};
  ${p => p.$run ? `&::after{content:'';position:absolute;left:4px;right:4px;bottom:0;height:2px;background:#76b9ed;}` : ''}
  ${p => p.$active ? `&::after{left:0;right:0;}` : ''}
`;
const TrayItem = styled.div<{ $w: number }>`
  width: ${p => p.$w}px; flex: none; display: flex; align-items: center; justify-content: center; flex-direction: column; gap: 5px; white-space: nowrap; font-size: 12px;
`;
const TrayBig = styled.span`font-size: 14px;`;
const Clock = styled.span`font-size: 13px;`;

/* overlays at the top */
const Ball = styled.div`
  position: absolute; left: 1009px; top: -26px; width: 44px; height: 44px; border-radius: 50%;
  background: #3cb85a; border: 2px solid #e6efe8; box-shadow: 0 1px 2px rgba(0,0,0,.55);
  color: #fff; font: 700 11px/1 "Liberation Sans", sans-serif;
  display: flex; align-items: flex-end; justify-content: center; padding-bottom: 5px;
`;
const Ime = styled.div`
  position: absolute; left: 757px; top: 14px; width: 186px; height: 24px; background: #fff; border: 1px solid #a9c8e2;
  display: flex; align-items: center; padding-left: 12px;
`;
const ImeLogo = styled.div`position: absolute; left: 736px; top: 10px;`;
const ImeKey = styled.span`color: #2a80d0; font-weight: 700; font-size: 14px; width: 20px; flex: none;`;
const ImeMark = styled.span`color: #2a80d0; font-weight: 700;`;
const ImeSlot = styled.div<{ $w: number }>`width: ${p => p.$w}px; flex: none; display: flex; justify-content: center;`;

/* ---------- data ---------- */
const ROW1: T[] = [
  { i: 'def', t: '定义', w: 51 }, { i: 'sigma', t: '汇总计算', w: 76 }, { i: 'cloud', t: '云检查', w: 63 },
  { i: 'flat', t: '平齐板顶', w: 75, off: true }, { i: 'bino', t: '查找图元', w: 72 }, { i: 'look', t: '查看钢筋量', w: 88 },
  { i: 'batch', t: '批量选择', w: 70, off: true },
];
const ROW1B: T[] = [
  { i: 'top', t: '俯视', w: 63, c: true }, { i: 'orbit', t: '动态观察', w: 76, on: true },
  { i: 'local', t: '局部三维', w: 77, off: true },
];
const ROW1C: T[] = [
  { i: 'full', t: '全屏', w: 51 }, { i: 'zoom', t: '缩放', w: 64, c: true }, { i: 'pan', t: '平移', w: 62, c: true },
  { i: 'screen', t: '屏幕旋转', w: 84, c: true, cm: 3 },
];
const ROW2: (T | 'sep')[] = [
  { i: 'del', t: '删除', w: 55, off: true }, 'sep', { i: 'copy', t: '复制', w: 52, off: true }, { i: 'mirror', t: '镜像', w: 52, off: true }, 'sep',
  { i: 'move', t: '移动', w: 51, off: true }, { i: 'rotate', t: '旋转', w: 53, off: true }, 'sep',
  { i: 'extend', t: '延伸', w: 51, off: true }, { i: 'trim', t: '修剪', w: 53, off: true }, 'sep',
  { i: 'brk', t: '打断', w: 53, off: true }, { i: 'merge', t: '合并', w: 49, off: true }, { i: 'split', t: '分割', w: 54, off: true }, 'sep',
  { i: 'align', t: '对齐', w: 58, off: true, c: true, cm: 3 }, { i: 'offset', t: '偏移', w: 50, off: true }, { i: 'stretch', t: '拉伸', w: 44, off: true }, 'sep',
  { i: 'grip', t: '设置夹点', w: 72, off: true },
];
const seq = (a: (T | 'sep')[], sw = 4) => a.map((d, k) => d === 'sep' ? <Sep key={k} $w={sw} /> : <Tools key={k} items={[d]} />);
const ROW3A: T[] = [
  { i: 'prop', t: '属性', w: 50 }, { i: 'edit', t: '编辑钢筋', w: 76, on: true }, { i: 'list', t: '构件列表', w: 75 }, { i: 'pick', t: '拾取构件', w: 74 },
];
const ROW3B: T[] = [
  { i: 'two', t: '两点', w: 51 }, { i: 'par', t: '平行', w: 51 }, { i: 'angle', t: '点角', w: 62, c: true },
  { i: 'arc3', t: '三点辅轴', w: 88, c: true }, { i: 'brush', t: '删除辅轴', w: 77 }, { i: 'dim', t: '长度标注', w: 85, c: true },
];
const SNAP1: T[] = [{ i: 'ortho', t: '正交', w: 51 }, { i: 'snap', t: '对象捕捉', w: 76, on: true }, { i: 'dyn', t: '动态输入', w: 74 }];
const SNAP2: T[] = [
  { i: 'cross', t: '交点', w: 50 }, { i: 'perp', t: '垂点', w: 52, on: true }, { i: 'mid', t: '中点', w: 51, on: true },
  { i: 'vertex', t: '顶点', w: 51 }, { i: 'coord', t: '坐标', w: 50 },
];
const EDIT: (T | 'sep')[] = [
  { i: 'first', w: 25 }, { i: 'prev', w: 23 }, { i: 'next', w: 24 }, { i: 'last', w: 25 }, 'sep',
  { i: 'up', w: 24 }, { i: 'down', w: 25 }, 'sep',
  { i: 'ins', t: '插入', w: 52, off: true }, { i: 'rm', t: '删除', w: 53, off: true }, { i: 'scale', t: '缩尺配筋', w: 75, off: true },
  { i: 'info', t: '钢筋信息', w: 74 }, { i: 'lib', t: '钢筋图库', w: 76 }, { i: 'other', t: '其他', w: 60, c: true, cm: 4 },
];
const MENUS: [string, number][] = [
  ['文件(F)', 48], ['编辑(E)', 49], ['楼层(L)', 48], ['构件(N)', 52], ['绘图(D)', 51], ['修改(M)', 54], ['钢筋量(Q)', 64],
  ['视图(V)', 50], ['工具(T)', 49], ['云应用(Y)', 62], ['BIM应用(I)', 69], ['在线服务(S)', 73], ['帮助(H)', 51], ['版本号(B)', 60],
];
type Node = { g?: string; i?: string; t: string; key?: string; last?: boolean; sel?: boolean; tags?: boolean };
const TREE: Node[] = [
  { i: 'spiral', t: '螺旋板', key: '(B)' }, { i: 'capital', t: '柱帽', key: '(V)' }, { i: 'hole', t: '板洞', key: '(N)' },
  { i: 'sbar', t: '板受力筋', key: '(S)' }, { i: 'nbar', t: '板负筋', key: '(F)' }, { i: 'band', t: '楼层板带', key: '(H)', last: true },
  { g: 'y', t: '基础' },
  { i: 'beam', t: '基础梁', key: '(F)' }, { i: 'raft', t: '筏板基础', key: '(M)' }, { i: 'pit', t: '集水坑', key: '(K)' }, { i: 'pier', t: '柱墩', key: '(Y)' },
  { i: 'rmain', t: '筏板主筋', key: '(R)' }, { i: 'nbar', t: '筏板负筋', key: '(X)' }, { i: 'iso', t: '独立基础', key: '(P)' }, { i: 'strip', t: '条形基础', key: '(T)' },
  { i: 'pcap', t: '桩承台', key: '(V)' }, { i: 'beam', t: '承台梁', key: '(F)' }, { i: 'pile', t: '桩', key: '(U)' }, { i: 'band', t: '基础板带', key: '(W)', last: true },
  { g: 'y', t: '其它' },
  { i: 'post', t: '后浇带', key: '(JD)' }, { i: 'eave', t: '挑檐', key: '(T)' }, { i: 'rail', t: '栏板', key: '(K)' }, { i: 'coping', t: '压顶', key: '(YD)', last: true },
  { g: 'y', t: '自定义' },
  { i: 'point', t: '自定义点' }, { i: 'cline', t: '自定义线', key: '(X)', sel: true }, { i: 'face', t: '自定义面' }, { i: 'mark', t: '尺寸标注', key: '(W)', last: true },
  { g: 'y', t: '上引', tags: true },
];

/* canvas */
const POLY: [string, string][] = [
  ['#005500', '607,307 1124,168 1174,168 1174,178 1275,240 592,422 573,427'],
  ['#4ea200', '804,255 854,241 827,358 775,367'],
  ['#5ab400', '854,241 978,208 946,325 827,358'],
  ['#a39d00', '768,372 827,358 806,431 756,431'],
  ['#b3b300', '827,358 946,325 915,431 806,431'],
  ['#a39d00', '265,168 316,168 240,431 190,431'],
  ['#b3b300', '316,168 464,168 561,278 607,307 590,431 240,431'],
  ['#55a500', '544,270 563,278 607,307 597,342 573,427 509,388'],
  ['#5ab400', '607,307 624,302 592,422 573,427'],
  ['#55cc00', '544,270 561,264 565,280'],
  ['#999999', '464,168 497,168 613,282 607,307 561,278'],
  ['#e6e6e6', '497,168 1047,168 613,282'],
  ['#b0b0b0', '613,282 1047,168 1124,168 607,307'],
  ['#999999', '1172,168 1198,168 1340,253 1334,277 1172,178'],
  ['#e6e6e6', '1198,168 1366,168 1366,246 1340,253'],
  ['#b0b0b0', '1340,253 1366,246 1366,269 1334,277'],
];
const REDS = ['1237,251 1366,328', '1007,312 1202,431', '953,328 1124,431', '934,363 1045,431', '1260,431 1366,403', '647,407 699,431', '167,347 222,382', '167,252 190,265', '167,319 195,340', '167,431 205,403', '167,196 190,185', '257,168 263,171'];
const A = [603, 320], B = [597.5, 341.7], C = [710.4, 385], D = [705.8, 407.7], E = [1120, 183], F = [1112, 205], G = [1227, 251], H = [1221.4, 271];
const lerp = (p: number[], q: number[], t: number) => [p[0] + (q[0] - p[0]) * t, p[1] + (q[1] - p[1]) * t];
const NS = Array.from({ length: 23 }, (_, i) => (i + 0.5) / 23);

const CanvasDrawing = () => (
  <CanvasArt width={1199} height={263} viewBox="167 168 1199 263" shapeRendering="crispEdges">
    {REDS.map((r, i) => <polyline key={i} points={r} stroke="#ff0000" fill="none" />)}
    {POLY.map(([f, p], i) => <polygon key={i} fill={f} points={p} />)}
    {/* wire cage */}
    {NS.map((t, i) => {
      const a = lerp(A, E, t), b = lerp(C, G, t);
      return <line key={i} x1={a[0]} y1={a[1]} x2={b[0]} y2={b[1]} stroke="#9c8c8c" />;
    })}
    {[0.25, 0.5, 0.75].map((s, i) => {
      const a = lerp(A, C, s), b = lerp(E, G, s);
      return <line key={i} x1={a[0]} y1={a[1]} x2={b[0]} y2={b[1]} stroke="#9c8c8c" />;
    })}
    {NS.map((t, i) => {
      const a = lerp(C, G, t), b = lerp(A, E, t);
      return (
        <g key={i}>
          <line x1={a[0]} y1={a[1] + 2} x2={a[0] - 3} y2={a[1] + 17} stroke="#a8a8a8" />
          <line x1={b[0]} y1={b[1] - 6} x2={b[0] - 2} y2={b[1] + 5} stroke="#5f9060" />
        </g>
      );
    })}
    <polyline points={`${A} ${E}`} fill="none" stroke="#98e898" strokeWidth="2" />
    <polyline points={`${B} ${F}`} fill="none" stroke="#98e898" strokeWidth="2" />
    <polyline points={`${A} ${B}`} fill="none" stroke="#98e898" strokeWidth="2" />
    <polyline points={`${E} ${F}`} fill="none" stroke="#98e898" strokeWidth="2" />
    <polyline points={`${A} ${C} ${G} ${E}`} fill="none" stroke="#fff" strokeWidth="2" />
    <polyline points={`${B} ${D} ${H} ${F}`} fill="none" stroke="#fff" strokeWidth="2" />
    <polyline points={`${C} ${D}`} fill="none" stroke="#fff" strokeWidth="2" />
    <polyline points={`${G} ${H}`} fill="none" stroke="#fff" strokeWidth="2" />
    <polyline points="563,330 570,304 590,300 598,325" fill="none" stroke="#7fa070" />
    <g shapeRendering="auto" fill="none" stroke="rgba(255,255,255,.55)">
      <circle cx="766" cy="298" r="117" />
      <circle cx="649" cy="298" r="8" />
      <circle cx="883" cy="299" r="8" />
      <circle cx="766" cy="182" r="8" />
      <circle cx="766" cy="415" r="8" />
    </g>
    {/* axis circles */}
    {[[180, 416, '0'], [178, 308, '1'], [178, 230, '5']].map(([x, y, t], i) => (
      <g key={i}>
        <circle cx={x as number} cy={y as number} r="13" fill="#000" stroke="#0a8a0a" strokeDasharray="6 0" />
        <line x1="167" y1={(y as number) + 6} x2="193" y2={(y as number) - 2} stroke="#f00" />
        <text x={x as number} y={(y as number) + 5} fontSize="15" fontFamily="Liberation Sans" fill="#ddd" textAnchor="middle">{t}</text>
      </g>
    ))}
    {/* gizmo */}
    <g shapeRendering="auto">
      <line x1="222" y1="382" x2="232" y2="345" stroke="#0a6fe8" strokeWidth="4" />
      <line x1="222" y1="382" x2="193" y2="364" stroke="#00e800" strokeWidth="4" />
      <polygon points="186,359 199,361 193,369" fill="#00e800" />
      <line x1="222" y1="382" x2="248" y2="374" stroke="#f00" strokeWidth="4" />
      <polygon points="254,372 244,368 246,378" fill="#f00" />
      <text x="200" y="363" fontSize="10" fill="#00e800" fontFamily="Liberation Sans" textAnchor="middle">Y</text>
      <text x="237" y="371" fontSize="12" fill="#f00" fontFamily="Liberation Sans" textAnchor="middle">X</text>
    </g>
  </CanvasArt>
);

const Shape1 = () => (
  <ShapeArt width="201" height="37">
    <polyline points="40.500,33 40.500,10.500 161.500,10.500 161.500,21" fill="none" stroke="#000" strokeWidth="2" />
    <text transform="translate(30,22) rotate(90)" textAnchor="middle" fontSize="11" fontFamily="Liberation Sans" fill="#111">138</text>
    <text x="70" y="19" textAnchor="middle" fontSize="11" fontFamily="Liberation Sans" fill="#111">182</text>
    <text x="123" y="14" textAnchor="middle" fontSize="11" fontFamily="Liberation Sans" fill="#111">585</text>
    <text transform="translate(169,12) rotate(90)" textAnchor="middle" fontSize="11" fontFamily="Liberation Sans" fill="#111">70</text>
  </ShapeArt>
);
const Shape2 = () => (
  <ShapeArt width="201" height="29">
    <line x1="23" x2="173" y1="18.500" y2="18.500" stroke="#000" strokeWidth="2" />
    <text x="101" y="14" textAnchor="middle" fontSize="12" fontFamily="Liberation Sans" fill="#f00">3250</text>
  </ShapeArt>
);

const GREEN = '#ccfed6';
const Steel = () => <Sym>Φ</Sym>;

const App = () => (
  <Page>
    <Global />
    <TitleBar>
      <Ic n="logo" s={17} />
      <TitleText>广联达BIM钢筋算量软件 GGJ2013 - [C:\Users\Administrator.PC-20141127NRHM\Desktop\白龙村-2018-02-02-19-24-35(2666版).GGJ12]</TitleText>
      <WinBtn><svg width="11" height="11"><path d="M0 5.500h11" stroke="#222" /></svg></WinBtn>
      <WinBtn><svg width="11" height="11"><path d="M.5 2.500h8v8h-8zM2.500 2.500v-2h8v8h-2" fill="none" stroke="#222" /></svg></WinBtn>
      <WinBtn><svg width="11" height="11"><path d="M.5.500l10 10M10.500.500l-10 10" stroke="#222" /></svg></WinBtn>
    </TitleBar>

    <MenuRow>
      <Chunk $w={937} $pad={7}>
        {MENUS.map(([m, w]) => <MenuItem key={m} $x={w}>{m}</MenuItem>)}
        <MenuItem $x={88}><Ic n="change" s={14} />新建变更</MenuItem>
        <MenuItem $x={50}><Ic n="cs" s={14} />广小二</MenuItem>
      </Chunk>
      <Chunk $w={185}><Ask>楼梯里高端平板净长是..</Ask></Chunk>
      <Chunk $pad={5}>
        <Ic n="user" s={16} />
        <MenuItem $x={102}><Phone>13907298339</Phone><Caret $m={3} /></MenuItem>
        <MenuItem $x={54}>造价豆:0</MenuItem>
        <Ic n="bell" s={16} />
        <More>»</More>
      </Chunk>
    </MenuRow>

    <ToolRow $h={25}>
      <Chunk $w={150} $pad={2}>
        <ToolBox $w={25}><Slot><Ic n="new" /></Slot></ToolBox>
        <ToolBox $w={33}><Slot><Ic n="open" /></Slot><Caret $m={4} /></ToolBox>
        <ToolBox $w={24}><Slot><Ic n="save" /></Slot></ToolBox>
        <Sep $w={5} />
        <ToolBox $w={38}><Slot><Ic n="undo" /></Slot><Caret $m={4} /></ToolBox>
        <More>»</More>
      </Chunk>
      <Chunk $w={548} $pad={1}>
        <Tools items={ROW1} />
        <More>»</More>
      </Chunk>
      <Chunk $w={662}>
        <ToolBox $w={65}><Slot><Ic n="cube" /></Slot><Label>三维</Label><Caret $m={7} /></ToolBox>
        <Tools items={ROW1B} />
        <Sep />
        <Tools items={ROW1C} />
        <Sep $w={6} />
        <Tools items={[{ i: 'floors', t: '选择楼层', w: 80 }]} />
        <More>»</More>
      </Chunk>
    </ToolRow>

    <Main>
      <Nav>
        <NavHead>模块导航栏<Pin>⊥</Pin><Close>X</Close></NavHead>
        <NavBtn>工程设置</NavBtn>
        <NavBtn>绘图输入</NavBtn>
        <TreeFrame>
          <TreeTools><Ic n="plus" s={18} /><Ic n="minus" s={18} /></TreeTools>
          <TreeBody>
            <TreeList>
              {TREE.map((n, i) => n.g ? (
                <TreeRow key={i}>
                  <GroupHead><Ic n="chev" s={12} /><Ic n="folder" s={16} /></GroupHead>
                  <GroupText $in={n.tags ? 24 : 4}>{n.t}</GroupText>
                  {n.tags && <TreeIconCell><Ic n="cols" s={16} /><Ic n="yel" s={20} /></TreeIconCell>}
                </TreeRow>
              ) : (
                <TreeRow key={i}>
                  <Elbow $last={n.last} />
                  <TreeIconCell $sel={n.sel}><Ic n={n.i!} /></TreeIconCell>
                  <TreeText $sel={n.sel}>{n.t}{n.key && <Key>{n.key}</Key>}</TreeText>
                  {n.sel && <TreeIconCell><Ic n="cols" s={14} /></TreeIconCell>}
                </TreeRow>
              ))}
            </TreeList>
            <VScroll>
              <Arrow><svg width="9" height="6"><path d="M1 5l3.500-3.500L8 5" fill="none" stroke="#555" strokeWidth="1.500" /></svg></Arrow>
              <VThumb />
              <Arrow $end><svg width="9" height="6"><path d="M1 1l3.500 3.500L8 1" fill="none" stroke="#555" strokeWidth="1.500" /></svg></Arrow>
            </VScroll>
          </TreeBody>
          <HScrollBar>
            <Arrow><svg width="6" height="9"><path d="M5 1L1.500 4.500 5 8" fill="none" stroke="#555" strokeWidth="1.500" /></svg></Arrow>
            <HThumbLeft />
            <Arrow><svg width="6" height="9"><path d="M1 1l3.500 3.500L1 8" fill="none" stroke="#555" strokeWidth="1.500" /></svg></Arrow>
          </HScrollBar>
        </TreeFrame>
        <NavBtn>单构件输入</NavBtn>
        <NavBtn>报表预览</NavBtn>
      </Nav>

      <Work>
        <ToolRow $h={22} $left={3}>
          <Chunk $w={788}><Grip />{seq(ROW2)}</Chunk>
        </ToolRow>
        <ToolRow $h={26} $top={5} $left={3}>
          <Chunk $w={564} $pad={6}>
            <ComboBox $w={56}>第7层<Caret /></ComboBox>
            <ComboBox $w={67} $ml={4}>自定义<Caret /></ComboBox>
            <ComboBox $w={66} $ml={5}>自定义线<Caret /></ComboBox>
            <ComboBox $w={69} $ml={6}>ZDYX-15<Caret /></ComboBox>
            <Sep $w={4} $ml={5} />
            <Tools items={ROW3A} />
          </Chunk>
          <Chunk $w={421}><Grip $w={7} /><Tools items={ROW3B} /></Chunk>
        </ToolRow>
        <ToolRow $h={26} $top={3} $left={3}>
          <Chunk $w={487} $pad={3}>
            <Grip $w={2} />
            <Tools items={[{ i: 'cursor', t: '选择', w: 65, c: true }]} />
            <Sep $w={5} />
            <Tools items={[{ i: 'line', t: '直线', w: 51 }, { i: 'ptplus', t: '点加长度', w: 75 }, { i: 'arc', t: '三点画弧', w: 87, c: true }]} />
            <ComboBox $w={54}><span /><Caret /></ComboBox>
            <Gap $w={4} />
            <Tools items={[{ i: 'rect', t: '矩形', w: 52 }]} />
            <Sep $w={5} />
            <Tools items={[{ i: 'smart', t: '智能布置', w: 84, c: true, cm: 2 }]} />
          </Chunk>
          <Gap $w={5} />
          <Chunk $w={23} />
        </ToolRow>

        <Canvas>
          <CanvasDrawing />
          <Floating>
            <FloatTitle>钢筋显示控制面板</FloatTitle>
            <FloatBody>
              {['水平纵筋', '横向钢筋', '显示其它图元', '显示详细公式'].map(t => (
                <CheckRow key={t}>
                  <Check><TinyCheck width="9" height="9"><path d="M1 4.500l2.500 2.500L8 2" fill="none" stroke="#444" strokeWidth="1.300" /></TinyCheck></Check>
                  {t}
                </CheckRow>
              ))}
            </FloatBody>
          </Floating>
        </Canvas>

        <SnapRow>
          <SnapChunk $w={206}><Grip $w={5} /><Tools items={SNAP1} /></SnapChunk>
          <SnapChunk $w={263}><Grip $w={9} /><Tools items={SNAP2} /></SnapChunk>
          <SnapChunk $w={411}>
            <Grip $w={7} />
            <ComboBox $w={55} $ml={3}>不偏移<Caret /></ComboBox>
            <Sep $w={3} $ml={6} />
            <Muted $w={20}>X=</Muted>
            <Spin $w={56}>0<SpinArrows /></Spin>
            <Muted $ml={2} $w={27}>mm</Muted>
            <Muted $w={18}>Y=</Muted>
            <Spin $w={57}>0<SpinArrows /></Spin>
            <Muted $ml={2} $w={25}>mm</Muted>
            <Sep $w={1} />
            <BoxCheck />
            <RotLabel>旋转</RotLabel>
            <Spin $w={67} $ml={4}>0.000<SpinArrows /></Spin>
            <Muted $ml={4}>°</Muted>
          </SnapChunk>
        </SnapRow>

        <Dock>
          <Strip><StripX /><StripDots /></Strip>
          <DockMain>
            <EditBar>
              {seq(EDIT, 2)}
              <CloseLabel>关闭</CloseLabel>
              <Sep $w={9} />
              <span>单构件钢筋总重(kg)：13.083</span>
            </EditBar>
            <GridFrame>
              <Grid>
                <Head />
                <Head>筋号</Head><Head>级别</Head><Head>图号</Head><Head>图形</Head><Head>计算公式</Head><Head>公式描述</Head>
                <Head>长度<Mono>(mm)</Mono></Head><Head $hot>根数</Head><Head>搭接</Head><Head>损耗<Mono>(%)</Mono></Head><Head>单重<Mono>(kg)</Mono></Head><Head $clip>总重<Mono>(kg)</Mono></Head>

                <Cell $bg="#ffd28a" $c="#5a0f80" $center><Mono>1*</Mono></Cell>
                <Rail $bg={GREEN}>横向钢筋<Mono>.1</Mono></Rail>
                <Cell $bg={GREEN} $center><Steel /></Cell>
                <Cell $bg={GREEN}><Mono>0</Mono></Cell>
                <Cell $bg={GREEN}><Shape1 /></Cell>
                <Cell $bg={GREEN}><Mono>655+40*d</Mono></Cell>
                <Cell $bg={GREEN}>净长+端头</Cell>
                <Cell $bg={GREEN}><Mono>975</Mono></Cell>
                <Cell $bg="#abe9d6"><Mono>23</Mono></Cell>
                <Cell $bg={GREEN}><Mono>0</Mono></Cell>
                <Cell $bg={GREEN}><Mono>0</Mono></Cell>
                <Cell $bg={GREEN}><Mono>0.385</Mono></Cell>
                <Cell $bg={GREEN}><Mono>8.858</Mono></Cell>

                <Cell $bg="linear-gradient(#fff,#f1f1f1)" $center><Mono>2</Mono></Cell>
                <Rail $bg={GREEN}>水平纵筋<Mono>.1</Mono></Rail>
                <Cell $bg={GREEN} $center><Steel /></Cell>
                <Cell $bg={GREEN}><Mono>1</Mono></Cell>
                <Cell $bg={GREEN}><Shape2 /></Cell>
                <Cell $bg={GREEN}><Mono>3250</Mono></Cell>
                <Cell $bg={GREEN}>净长</Cell>
                <Cell $bg={GREEN}><Mono>3250</Mono></Cell>
                <Cell $bg={GREEN}><Mono>5</Mono></Cell>
                <Cell $bg={GREEN}><Mono>0</Mono></Cell>
                <Cell $bg={GREEN}><Mono>0</Mono></Cell>
                <Cell $bg={GREEN}><Mono>0.845</Mono></Cell>
                <Cell $bg={GREEN}><Mono>4.225</Mono></Cell>

                <Cell $bg="linear-gradient(#fff,#f1f1f1)" $center><Mono>3</Mono></Cell>
                <Rail />
                <Cell /><Cell /><Cell /><Cell /><Cell /><Cell /><Cell /><Cell /><Cell /><Cell /><Cell />
              </Grid>
              <GridSpace />
              <HBar>
                <Arrow><svg width="6" height="9"><path d="M5 1L1.500 4.500 5 8" fill="none" stroke="#555" strokeWidth="1.500" /></svg></Arrow>
                <HThumb />
                <HEnd><svg width="6" height="9"><path d="M1 1l3.500 3.500L1 8" fill="none" stroke="#555" strokeWidth="1.500" /></svg></HEnd>
              </HBar>
            </GridFrame>
          </DockMain>
        </Dock>
      </Work>
    </Main>

    <Status>
      <StatusCell $w={148}><Mono>X=—41740 Y=—10765</Mono></StatusCell>
      <StatusCell $w={78}>层高:<Mono>2.8m</Mono></StatusCell>
      <StatusCell $w={98}>底标高:<Mono>20.35m</Mono></StatusCell>
      <StatusCell $w={48}><Mono>1(1)</Mono></StatusCell>
      <StatusCell />
      <StatusCell $w={69}><Mono>259 FPS</Mono></StatusCell>
    </Status>

    <TaskBar>
      <Start><Tb n="win" s={20} /></Start>
      <Search>
        <Tb n="ring" />
        <SearchTx>在这里输入你要搜索的内容</SearchTx>
        <Tb n="mic" s={22} />
      </Search>
      <App_ $w={49}><Tb n="view" s={22} /></App_>
      <App_ $w={51}><Tb n="fan" /></App_>
      <App_ $w={52}><Tb n="ieb" /></App_>
      <App_ $w={51}><Tb n="swirl" /></App_>
      <App_ $w={50}><Tb n="edge" /></App_>
      <App_ $w={49}><Tb n="ie" /></App_>
      <App_ $w={48}><Tb n="folder" /></App_>
      <App_ $w={48} $run><Tb n="g" /></App_>
      <App_ $w={48} $run $active><Tb n="gld" /></App_>
      <App_ $w={48} $run><Tb n="note" /></App_>
      <App_ $w={48} $run><Tb n="egreen" /></App_>
      <TrayItem $w={51}>链接</TrayItem>
      <TrayItem $w={61}><span>29%</span><span>CPU使用</span></TrayItem>
      <TrayItem $w={25}><Tb n="caret" s={18} /></TrayItem>
      <TrayItem $w={26}><Tb n="batt" s={20} /></TrayItem>
      <TrayItem $w={24}><Tb n="wifi" s={20} /></TrayItem>
      <TrayItem $w={24}><Tb n="spk" s={20} /></TrayItem>
      <TrayItem $w={30}><Tb n="kbd" s={22} /></TrayItem>
      <TrayItem $w={26}><TrayBig>英</TrayBig></TrayItem>
      <TrayItem $w={28}><Tb n="s" s={18} /></TrayItem>
      <TrayItem $w={84}><Clock>20:45</Clock><span>2018/7/4</span></TrayItem>
      <TrayItem $w={48}><Tb n="notif" s={20} /></TrayItem>
    </TaskBar>

    {/* system overlays that sit on top of the application */}
    <Ball>71</Ball>
    <Ime>
      <ImeKey>英</ImeKey>
      <ImeSlot $w={22}><ImeMark>•,</ImeMark></ImeSlot>
      <ImeSlot $w={22}><Ic n="smile" /></ImeSlot>
      <ImeSlot $w={22}><Ic n="mic" /></ImeSlot>
      <ImeSlot $w={22}><Ic n="kb" s={17} /></ImeSlot>
      <ImeSlot $w={25}><Ic n="pers" /></ImeSlot>
      <ImeSlot $w={19}><Ic n="shirt" /></ImeSlot>
      <ImeSlot $w={22}><Ic n="wrench" /></ImeSlot>
    </Ime>
    <ImeLogo><Tb n="s" s={30} /></ImeLogo>
  </Page>
);

export default App;
